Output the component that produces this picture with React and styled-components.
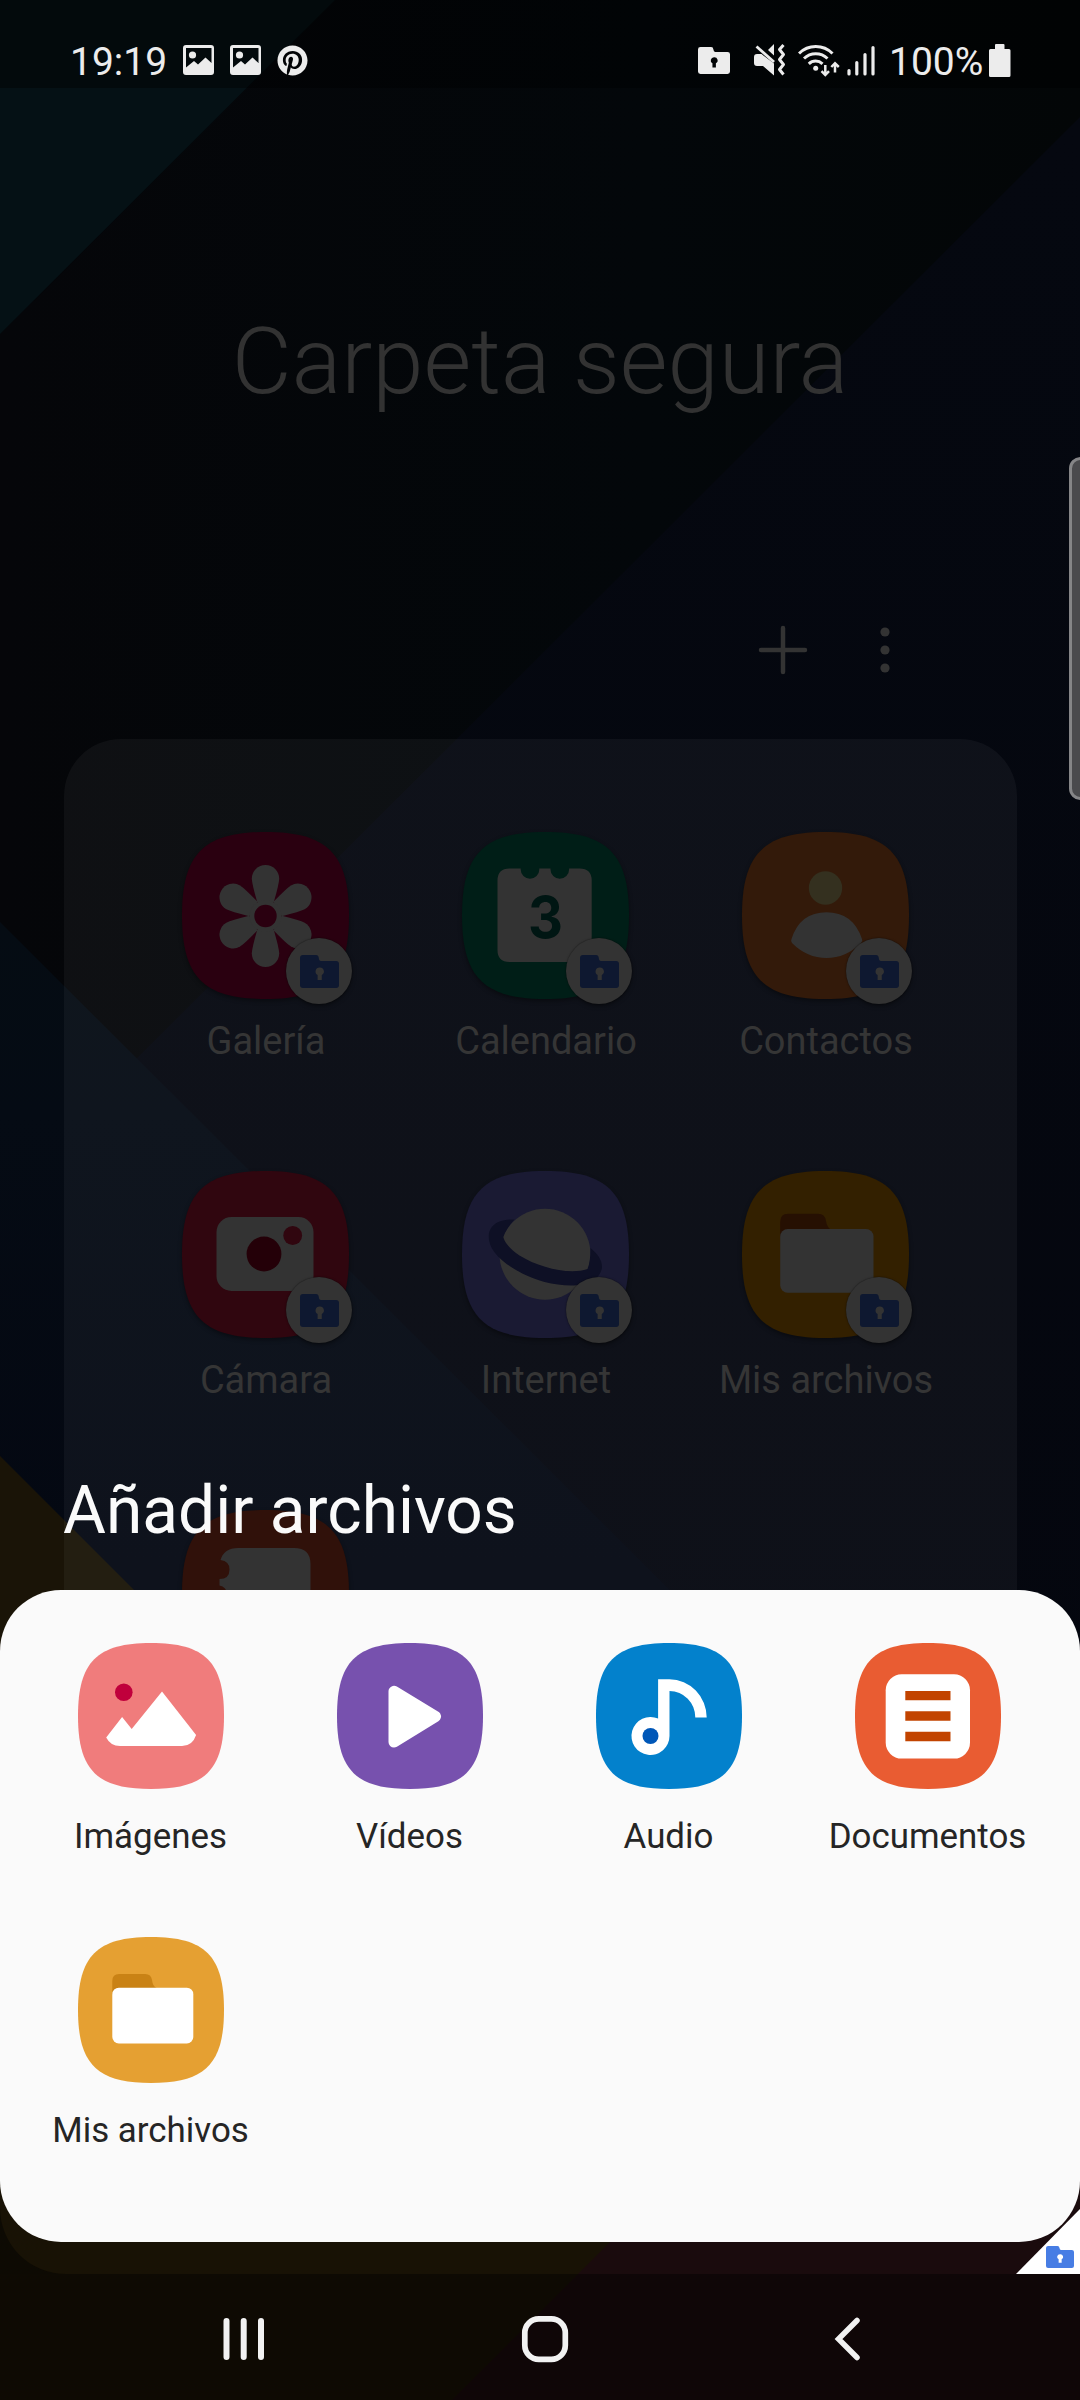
import React from "react";
import styled, { createGlobalStyle } from "styled-components";
import { FaPinterest } from "react-icons/fa";

const GlobalStyle = createGlobalStyle`
  body {
    margin: 0;
    background: #000;
    font-family: Roboto, "Noto Sans", sans-serif;
  }
  svg {
    display: block;
  }
`;

const Phone = styled.div`
  position: relative;
  display: flex;
  flex-direction: column;
  width: 1080px;
  height: 2400px;
  overflow: hidden;
`;

const WallpaperSvg = styled.svg`
  position: absolute;
  inset: 0;
  z-index: -1;
`;

const StatusBar = styled.div`
  display: flex;
  align-items: center;
  box-sizing: border-box;
  height: 88px;
  padding: 32px 69px 0 70px;
  background: rgba(0, 0, 0, 0.4);
  color: #ececec;
`;

const StatusGroup = styled.div`
  display: flex;
  align-items: center;
  height: 32px;
  margin-left: ${(props) => (props.$end ? "auto" : "0")};
`;

const StatusText = styled.div`
  width: ${(props) => props.$width}px;
  padding-top: 3px;
  font-size: 39px;
  line-height: 40px;
  white-space: nowrap;
`;

const StatusIcon = styled.div`
  margin-right: ${(props) => props.$gap || 0}px;
`;

const Home = styled.div`
  display: flex;
  flex-direction: column;
  height: 2186px;
`;

const Title = styled.div`
  margin-top: 219px;
  font-size: 92.3px;
  font-weight: 300;
  line-height: 110px;
  text-align: center;
  color: #323232;
`;

const Toolbar = styled.div`
  display: flex;
  justify-content: flex-end;
  align-items: center;
  gap: 72px;
  height: 50px;
  margin-top: 207.5px;
  padding-right: 190.5px;
`;

const FolderPanel = styled.div`
  display: grid;
  grid-template-columns: repeat(3, 280px);
  grid-auto-rows: 339px;
  box-sizing: border-box;
  width: 953px;
  height: 1380px;
  margin: 64.5px 0 0 64px;
  padding: 93px 0 0 62px;
  border-radius: 57px;
  background: rgba(255, 255, 250, 0.043);
`;

const FolderApp = styled.div`
  display: flex;
  flex-direction: column;
  align-items: center;
`;

const AppIcon = styled.div`
  position: relative;
  width: 167px;
  height: 167px;
  margin-right: 1px;
  filter: drop-shadow(0 2px 2px rgba(0, 0, 0, 0.4));
`;

const AppLabel = styled.div`
  margin-top: 20px;
  font-size: 38px;
  line-height: 44px;
  white-space: nowrap;
  color: #353535;
`;

const Badge = styled.div`
  position: absolute;
  left: 104px;
  top: 106px;
  display: flex;
  align-items: center;
  justify-content: center;
  width: 66px;
  height: 66px;
  border-radius: 50%;
  background: #333;
  box-shadow: 0 0 2px rgba(0, 0, 0, 0.6);
`;

const Sheet = styled.div`
  position: absolute;
  left: 0;
  right: 0;
  bottom: 158px;
`;

const SheetTitle = styled.div`
  margin: 0 0 39px 63px;
  font-size: 65.8px;
  line-height: 80px;
  color: #fafafa;
`;

const SheetCard = styled.div`
  display: grid;
  grid-template-columns: repeat(4, 259px);
  grid-auto-rows: 294px;
  box-sizing: border-box;
  height: 652px;
  padding: 53px 0 0 21px;
  border-radius: 61px;
  background: #fafafa;
`;

const SheetItem = styled.div`
  display: flex;
  flex-direction: column;
  align-items: center;
`;

const SheetLabel = styled.div`
  margin-top: 27.5px;
  font-size: 34.9px;
  line-height: 40px;
  white-space: nowrap;
  color: #252525;
`;

const NavBar = styled.div`
  display: flex;
  align-items: center;
  justify-content: space-between;
  box-sizing: border-box;
  height: 126px;
  padding: 3px 218px 0 222px;
  background: rgba(0, 0, 0, 0.4);
`;

const NavIcon = styled.div`
  display: flex;
  justify-content: ${(props) => props.$align || "center"};
  width: 60px;
`;

const EdgeHandle = styled.div`
  position: absolute;
  top: 457px;
  right: -12px;
  box-sizing: border-box;
  width: 23px;
  height: 343px;
  border: 3px solid #858587;
  border-radius: 12px;
  background: #4a4a4d;
`;

const SecureCorner = styled.div`
  position: absolute;
  right: 0;
  bottom: 126px;
  display: flex;
  align-items: flex-end;
  justify-content: flex-end;
  box-sizing: border-box;
  width: 64px;
  height: 65px;
  padding: 0 6px 6px 0;
  background: #fff;
  clip-path: polygon(100% 0, 100% 100%, 0 100%);
`;

function Wallpaper() {
  return (
    <WallpaperSvg width="1080" height="2400" viewBox="0 0 1080 2400">
      <defs>
        <linearGradient id="shade" x1="0" y1="0" x2="1" y2="0">
          <stop offset="0" stopColor="#050609" />
          <stop offset="0.6" stopColor="#03070a" />
          <stop offset="1" stopColor="#030607" />
        </linearGradient>
        <linearGradient id="navy" x1="0" y1="0" x2="0" y2="1">
          <stop offset="0" stopColor="#050810" />
          <stop offset="1" stopColor="#04060e" />
        </linearGradient>
        <linearGradient id="blue" x1="0" y1="922" x2="0" y2="1560" gradientUnits="userSpaceOnUse">
          <stop offset="0" stopColor="#050c13" />
          <stop offset="0.3" stopColor="#050b14" />
          <stop offset="1" stopColor="#040812" />
        </linearGradient>
      </defs>
      <rect width="1080" height="2400" fill="url(#shade)" />
      <path d="M0 0H335L0 334Z" fill="#051115" />
      <path d="M1080 117V2400H500L100 1095Z" fill="url(#navy)" />
      <path d="M0 922L780 1700V2400H0Z" fill="url(#blue)" />
      <path d="M0 1456L900 2356V2400H0Z" fill="#1a1407" />
      <path d="M0 2190H662L452 2400H0Z" fill="#181205" />
      <path d="M1080 1772V2400H452Z" fill="#1a0b0d" />
      {/* the app window ends in a rounded corner above the nav bar */}
      <path d="M0 2208A66 66 0 0 0 66 2274H0Z" fill="#0d0a03" />
    </WallpaperSvg>
  );
}

function Squircle({ color }) {
  return (
    <path
      d="M50 0C87 0 100 13 100 50S87 100 50 100 0 87 0 50 13 0 50 0Z"
      fill={color}
    />
  );
}

// glyphs are drawn in pixels, the background in a 100 unit box
function Icon({ size, color, children }) {
  return (
    <svg width={size} height={size} viewBox={`0 0 ${size} ${size}`}>
      <g transform={`scale(${size / 100})`}>
        <Squircle color={color} />
      </g>
      {children}
    </svg>
  );
}

function SecureFolder({ width, height, color }) {
  return (
    <svg width={width} height={height} viewBox="0 0 39 33" preserveAspectRatio="none">
      <path
        d="M3 0H16Q18.500 0 18.800 3Q19 6 21 6H36Q39 6 39 9V30Q39 33 36 33H3Q0 33 0 30V3Q0 0 3 0ZM19.500 12.500A4 4 0 0 0 17.600 20V25H21.800V20A4 4 0 0 0 19.500 12.500Z"
        fill={color}
        fillRule="evenodd"
      />
    </svg>
  );
}

function PictureIcon() {
  return (
    <svg width="31" height="30" viewBox="0 0 31 30">
      <path
        d="M3 0H28Q31 0 31 3V27Q31 30 28 30H3Q0 30 0 27V3Q0 0 3 0ZM3 3V22.500L11 16L15 19.500L22.500 12.500L28.500 18V3Z"
        fill="#ececec"
        fillRule="evenodd"
      />
      <circle cx="9.500" cy="10" r="3.600" fill="#ececec" />
    </svg>
  );
}

function MuteIcon() {
  return (
    <svg width="32" height="32" viewBox="0 0 32 32">
      <path d="M0 13Q0 10 3 10H7.500L20 19.500V31.500L9 22H3Q0 22 0 19Z" fill="#ececec" />
      <path d="M20 0V11.500L14 6Z" fill="#ececec" />
      <path d="M2.500 2.500L20 18" stroke="#ececec" strokeWidth="2.800" />
      <path
        d="M29.500 1L25.500 5.500L29.500 10.500L25.500 15.500L29.500 20.500L25.500 25.500L29.500 30.500"
        fill="none"
        stroke="#ececec"
        strokeWidth="3"
        strokeLinejoin="round"
      />
    </svg>
  );
}

function WifiIcon() {
  return (
    <svg width="42" height="33" viewBox="0 0 42 33">
      <g fill="none" stroke="#ececec" strokeWidth="3">
        <path d="M1 9.500A23.500 23.500 0 0 1 34.500 9.500" />
        <path d="M6 14.500A17 17 0 0 1 29.500 14.500" />
        <path d="M10.800 19.800A10 10 0 0 1 24.500 19.800" />
        <path d="M27.300 21V31M23.500 27.200L27.300 31L31 27.200" strokeWidth="2.500" />
        <path d="M37 28.500V19M33.300 23L37 19.200L40.800 23" strokeWidth="2.500" />
      </g>
      <circle cx="17.700" cy="24.300" r="2.500" fill="#ececec" />
    </svg>
  );
}

function SignalIcon() {
  return (
    <svg width="28" height="31" viewBox="0 0 28 31">
      <path
        d="M2 25.500V29M9.800 17.500V29M18 9.500V29M26 2.500V29"
        stroke="#ececec"
        strokeWidth="3.200"
        strokeLinecap="round"
      />
    </svg>
  );
}

function BatteryIcon() {
  return (
    <svg width="22" height="33" viewBox="0 0 22 33">
      <path
        d="M7 0H14.500Q15.500 0 15.500 1V5H20Q21.500 5 21.500 6.500V31.500Q21.500 33 20 33H1.500Q0 33 0 31.500V6.500Q0 5 1.500 5H6V1Q6 0 7 0Z"
        fill="#ececec"
      />
    </svg>
  );
}

function GalleryGlyph() {
  return (
    <g transform="translate(83.500 84)" fill="#333">
      {[0, 60, 120, 180, 240, 300].map((angle) => (
        <path
          key={angle}
          transform={`rotate(${angle})`}
          d="M-13.700 -37.300A13.700 13.700 0 0 1 13.700 -37.300Q13.500 -32 8.300 -14H-8.300Q-13.500 -32 -13.700 -37.300Z"
        />
      ))}
      <circle r="16" />
      <circle r="11.200" fill="#2a0010" />
    </g>
  );
}

function CalendarGlyph() {
  return (
    <>
      <path
        d="M47.500 36.500H58.700V37.500A9.300 9.300 0 1 0 77.300 37.500V36.500H88.500V37.500A9.300 9.300 0 1 0 107.100 37.500V36.500H117.500Q129.700 36.500 129.700 48.500V118Q129.700 130 117.500 130H47.500Q35.500 130 35.500 118V48.500Q35.500 36.500 47.500 36.500Z"
        fill="#333"
      />
      <text
        x="83.500"
        y="105.500"
        textAnchor="middle"
        fontFamily="Inter, Roboto, sans-serif"
        fontWeight="700"
        fontSize="58"
        textLength="35"
        lengthAdjust="spacingAndGlyphs"
        fill="#001613"
      >
        3
      </text>
    </>
  );
}

function ContactsGlyph() {
  return (
    <>
      <circle cx="83.500" cy="56" r="16.700" fill="#34301f" />
      <path
        d="M49.500 107Q58 80.300 84.500 80.300T120 107Q121 109 119 111Q104 126 84.500 126T50 111Q48.500 109 49.500 107Z"
        fill="#333"
      />
    </>
  );
}

function CameraGlyph() {
  return (
    <>
      <rect x="34.500" y="46" width="97" height="74" rx="15" fill="#333" />
      <circle cx="82" cy="83" r="17.400" fill="#240008" />
      <circle cx="110.700" cy="64.500" r="9.400" fill="#30060f" />
    </>
  );
}

function InternetGlyph() {
  return (
    <g transform="translate(-462.500 -1171)">
      <circle cx="545.500" cy="1254.200" r="45.500" fill="#333" />
      <path
        d="M515 1219.500C495 1219 488 1228 489.500 1240C492 1258 520 1275 545 1282C570 1288 598 1288 602.500 1268C603 1260 598 1254 591 1248Q591 1262 588 1269C570 1275 540 1268 520 1255.500C510 1249 505 1242 503.800 1237Q507 1228 515 1219.500Z"
        fill="#0e1025"
      />
    </g>
  );
}

function FilesGlyph() {
  return (
    <>
      <path
        d="M38.200 66V51Q38.200 42.700 46 42.700H76Q83 42.700 84 50Q85 57 90 59V66Z"
        fill="#261002"
      />
      <rect x="38.200" y="58" width="93.300" height="63.700" rx="7.500" fill="#333" />
    </>
  );
}

function NotesGlyph() {
  return (
    <path
      d="M38.500 50Q42 38 56 38H112Q128.500 38 128.500 54V130H37.500V95Q38.500 95 38.500 94A9.500 9.500 0 0 0 37.500 75.500V69Q47.500 69 47.500 59.500Q47.500 51 38.500 50Z"
      fill="#333"
    />
  );
}

function ImagesGlyph() {
  return (
    <>
      <circle cx="45.800" cy="49.300" r="8.800" fill="#c0003c" />
      <path
        d="M28.200 94.500L44.100 74L53.700 86L84 48.500L118.100 92Q114.500 103 104 103H42Q32.500 103 28.200 94.500Z"
        fill="#fff"
      />
    </>
  );
}

function VideosGlyph() {
  return (
    <path
      d="M57 48.300V99L98.500 73.500Z"
      fill="#fff"
      stroke="#fff"
      strokeWidth="11"
      strokeLinejoin="round"
    />
  );
}

function AudioGlyph() {
  return (
    <>
      <path
        d="M62.100 36.300H73.500A37.200 38.200 0 0 1 110.700 74.500H99.300A25.800 26.500 0 0 0 73.500 48V93A19 19 0 1 1 62.100 75.600Z"
        fill="#fff"
      />
      <circle cx="54.500" cy="93" r="8" fill="#0057b8" />
    </>
  );
}

function DocsGlyph() {
  return (
    <>
      <rect x="30.700" y="31.300" width="84.300" height="84.300" rx="16" fill="#fff" />
      <path d="M50.300 52.700H95.500M50.300 73H95.500M50.300 93.500H95.500" stroke="#c24400" strokeWidth="9.300" />
    </>
  );
}

function MyFilesGlyph() {
  return (
    <>
      <path
        d="M34.300 58V44Q34.300 37 41.200 37H67.200Q73.200 37 74 43Q74.700 49.500 78.700 51V58Z"
        fill="#c98215"
      />
      <rect x="34.300" y="50.700" width="81" height="55.800" rx="6.500" fill="#fff" />
    </>
  );
}

const apps = [
  { name: "Galería", color: "#2a0010", Glyph: GalleryGlyph },
  { name: "Calendario", color: "#001e17", Glyph: CalendarGlyph },
  { name: "Contactos", color: "#331a0a", Glyph: ContactsGlyph },
  { name: "Cámara", color: "#30060f", Glyph: CameraGlyph },
  { name: "Internet", color: "#1a1a33", Glyph: InternetGlyph },
  { name: "Mis archivos", color: "#332000", Glyph: FilesGlyph },
  { name: "Notes", color: "#30110a", Glyph: NotesGlyph, covered: true },
];

const sources = [
  { name: "Imágenes", color: "#f07c7c", Glyph: ImagesGlyph },
  { name: "Vídeos", color: "#7751ae", Glyph: VideosGlyph },
  { name: "Audio", color: "#0381cc", Glyph: AudioGlyph },
  { name: "Documentos", color: "#e95c32", Glyph: DocsGlyph },
  { name: "Mis archivos", color: "#e5a032", Glyph: MyFilesGlyph },
];

function App() {
  return (
    <>
      <GlobalStyle />
      <Phone>
        <Wallpaper />
        <StatusBar>
          <StatusGroup>
            <StatusText $width={113}>19:19</StatusText>
            <StatusIcon $gap={16}>
              <PictureIcon />
            </StatusIcon>
            <StatusIcon $gap={16}>
              <PictureIcon />
            </StatusIcon>
            <FaPinterest size={31} />
          </StatusGroup>
          <StatusGroup $end>
            <StatusIcon $gap={24}>
              <SecureFolder width={32} height={27} color="#ececec" />
            </StatusIcon>
            <StatusIcon $gap={12}>
              <MuteIcon />
            </StatusIcon>
            <StatusIcon $gap={7}>
              <WifiIcon />
            </StatusIcon>
            <StatusIcon $gap={14}>
              <SignalIcon />
            </StatusIcon>
            <StatusText $width={100}>100%</StatusText>
            <BatteryIcon />
          </StatusGroup>
        </StatusBar>
        <Home>
          <Title>Carpeta segura</Title>
          <Toolbar>
            <svg width="50" height="50" viewBox="0 0 50 50">
              <path d="M25 3V47M3 25H47" stroke="#333" strokeWidth="4.500" strokeLinecap="round" />
            </svg>
            <svg width="10" height="46" viewBox="0 0 10 46">
              <circle cx="5" cy="5" r="4.600" fill="#333" />
              <circle cx="5" cy="23" r="4.600" fill="#333" />
              <circle cx="5" cy="41" r="4.600" fill="#333" />
            </svg>
          </Toolbar>
          <FolderPanel>
            {apps.map(({ name, color, Glyph, covered }) => (
              <FolderApp key={name}>
                <AppIcon>
                  <Icon size={167} color={color}>
                    <Glyph />
                  </Icon>
                  {!covered && (
                    <Badge>
                      <SecureFolder width={39} height={33} color="#0e1830" />
                    </Badge>
                  )}
                </AppIcon>
                {!covered && <AppLabel>{name}</AppLabel>}
              </FolderApp>
            ))}
          </FolderPanel>
        </Home>
        <NavBar>
          <NavIcon $align="flex-start">
            <svg width="44" height="46" viewBox="0 0 44 46">
              <path
                d="M4.500 5V41M21.700 5V41M39 5V41"
                stroke="#f2f2f2"
                strokeWidth="6"
                strokeLinecap="round"
              />
            </svg>
          </NavIcon>
          <NavIcon>
            <svg width="54" height="48" viewBox="0 0 54 48">
              <rect
                x="9.800"
                y="3.800"
                width="40.500"
                height="40.500"
                rx="14"
                fill="none"
                stroke="#f2f2f2"
                strokeWidth="5.700"
              />
            </svg>
          </NavIcon>
          <NavIcon $align="flex-end">
            <svg width="30" height="46" viewBox="0 0 30 46">
              <path
                d="M25 4.500L6.500 23L25 41.500"
                fill="none"
                stroke="#f2f2f2"
                strokeWidth="5.500"
                strokeLinecap="round"
              />
            </svg>
          </NavIcon>
        </NavBar>
        <SecureCorner>
          <SecureFolder width={28} height={22} color="#477de4" />
        </SecureCorner>
        <Sheet>
          <SheetTitle>Añadir archivos</SheetTitle>
          <SheetCard>
            {sources.map(({ name, color, Glyph }) => (
              <SheetItem key={name}>
                <Icon size={146} color={color}>
                  <Glyph />
                </Icon>
                <SheetLabel>{name}</SheetLabel>
              </SheetItem>
            ))}
          </SheetCard>
        </Sheet>
        <EdgeHandle />
      </Phone>
    </>
  );
}

export default App;
